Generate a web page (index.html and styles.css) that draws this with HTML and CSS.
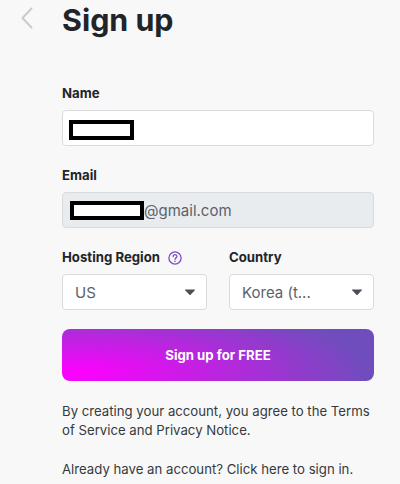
FILE: index.html
```
<!DOCTYPE html>
<html lang="en">
<head>
    <meta charset="UTF-8">
    <meta name="viewport" content="width=device-width, initial-scale=1.0">
    <title>Sign up</title>
    <link rel="stylesheet" href="styles.css">
</head>
<body>
    <div class="signup">
        <div class="back">
            <svg width="12" height="22" viewBox="0 0 12 22" fill="none" stroke="#cbcbcb" stroke-width="2" stroke-linecap="round" stroke-linejoin="round">
                <path d="M10.5 1.5 L1.5 11 L10.5 20.5"/>
            </svg>
        </div>
        <form class="form">
            <h1>Sign up</h1>

            <div class="field">
                <div class="label">Name</div>
                <div class="control">
                    <span class="mask mask-name"></span>
                </div>
            </div>

            <div class="field">
                <div class="label">Email</div>
                <div class="control disabled">
                    <span class="mask mask-email"></span>
                    <span>@gmail.com</span>
                </div>
            </div>

            <div class="field-row">
                <div class="field">
                    <div class="label">
                        Hosting Region
                        <svg class="help" width="14" height="14" viewBox="0 0 14 14" fill="none" stroke="#7a4fc4" stroke-width="1.3">
                            <circle cx="7" cy="7" r="6.1"/>
                            <path d="M5.1 5.6 C5.1 3.1 8.9 3.1 8.9 5.5 C8.9 6.9 7 6.8 7 8.3" stroke-linecap="round"/>
                            <circle cx="7" cy="10.2" r="0.8" fill="#7a4fc4" stroke="none"/>
                        </svg>
                    </div>
                    <div class="control select">
                        <span>US</span>
                        <svg width="12" height="7" viewBox="0 0 12 7" fill="#495057"><path d="M1.5 0.5 H10.5 Q11.5 0.5 10.8 1.3 L6.6 5.8 Q6 6.4 5.4 5.8 L1.2 1.3 Q0.5 0.5 1.5 0.5 Z"/></svg>
                    </div>
                </div>
                <div class="field">
                    <div class="label">Country</div>
                    <div class="control select">
                        <span>Korea (t...</span>
                        <svg width="12" height="7" viewBox="0 0 12 7" fill="#495057"><path d="M1.5 0.5 H10.5 Q11.5 0.5 10.8 1.3 L6.6 5.8 Q6 6.4 5.4 5.8 L1.2 1.3 Q0.5 0.5 1.5 0.5 Z"/></svg>
                    </div>
                </div>
            </div>

            <button type="button" class="submit">Sign up for FREE</button>

            <p>By creating your account, you agree to the Terms<br>of Service and Privacy Notice.</p>
            <p>Already have an account? Click here to sign in.</p>
        </form>
    </div>
</body>
</html>
```

FILE: styles.css
```
* {
    box-sizing: border-box;
}
body {
    margin: 0;
    background: #f8f8f8;
    color: #212529;
    font-family: Inter, sans-serif;
    font-size: 13.2px;
    line-height: 19.5px;
    overflow: hidden;
}
.signup {
    display: flex;
}
.back {
    width: 62px;
    padding: 7px 0 0 21px;
}
.back svg {
    display: block;
}
.form {
    width: 312px;
}
h1 {
    margin: 0 0 44px;
    font-size: 30.4px;
    font-weight: 700;
    line-height: 40px;
}
.field {
    flex: 1;
    margin-bottom: 20px;
}
.label {
    display: flex;
    align-items: center;
    height: 20px;
    margin-bottom: 6px;
    font-size: 13.2px;
    font-weight: 700;
}
.help {
    margin-left: 8px;
}
.control {
    display: flex;
    align-items: center;
    height: 36px;
    padding: 1px 12px 0 11px;
    background: #fff;
    border: 1px solid #d8dbde;
    border-radius: 4px;
    color: #5c6269;
    font-size: 15px;
}
.disabled {
    background: #e9ecef;
}
.mask {
    flex: none;
    background: #fff;
    border: 4px solid #000;
}
.mask-name {
    width: 65px;
    height: 20px;
    margin: 2px 0 0 -5px;
}
.mask-email {
    width: 74px;
    height: 19px;
    margin-left: -4px;
}
.field-row {
    display: flex;
    gap: 22px;
}
.field-row .field {
    margin-bottom: 19px;
}
.select {
    justify-content: space-between;
    padding-right: 10px;
    padding-left: 12px;
}
.submit {
    display: block;
    width: 100%;
    height: 52px;
    margin-bottom: 20.5px;
    border: none;
    border-radius: 8px;
    background: radial-gradient(290px 73px at 5% 84%, #ff00ff, #704dbd);
    color: #fff;
    font-family: inherit;
    font-size: 13.2px;
    font-weight: 700;
}
p {
    margin: 0 0 19px;
    color: #343a40;
}
```
